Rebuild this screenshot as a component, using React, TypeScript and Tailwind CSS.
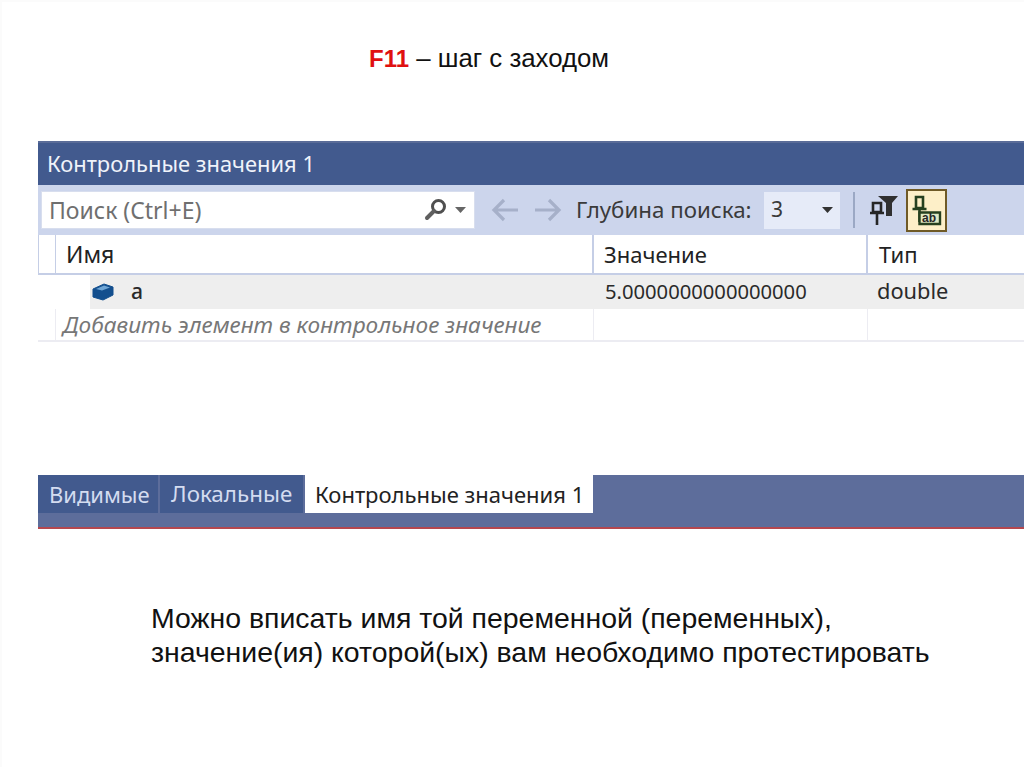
const ui = { fontFamily: '"Noto Sans", "Open Sans", sans-serif' };

function Search() {
  return (
    <svg width="26" height="26" viewBox="0 0 26 26" className="shrink-0">
      <circle cx="15.5" cy="9.5" r="6" fill="none" stroke="#4f4f4f" strokeWidth="3" />
      <path d="M11 14 L4 21" stroke="#5f5f5f" strokeWidth="4" strokeLinecap="round" />
    </svg>
  );
}

function Arrow({ flip }: { flip?: boolean }) {
  return (
    <svg width="28" height="24" viewBox="0 0 28 24" style={flip ? { transform: "scaleX(-1)" } : undefined}>
      <path d="M13 2 L3 12 L13 22 M3 12 H27" fill="none" stroke="#a6b0c9" strokeWidth="3.2" />
    </svg>
  );
}

function Caret({ color = "#555" }: { color?: string }) {
  return <svg width="11" height="6" viewBox="0 0 11 6"><path d="M0 0H11L5.5 6Z" fill={color} /></svg>;
}

function PinFilter() {
  return (
    <svg width="30" height="32" viewBox="0 0 30 32">
      <path d="M3 9h8v9H3z" fill="none" stroke="#262626" strokeWidth="2.6" />
      <path d="M0 19h14M7 19v12" stroke="#262626" strokeWidth="2.6" />
      <path d="M8 2h20l-6 7v13h-6V9z" fill="#303030" />
    </svg>
  );
}

function PinTab() {
  return (
    <svg width="37" height="39" viewBox="0 0 37 39">
      <path d="M8 6h7v11H8z" fill="none" stroke="#26401f" strokeWidth="2.6" />
      <path d="M4.5 18h14M11.5 18v13" stroke="#26401f" strokeWidth="2.6" />
      <path d="M11.5 21.5H32V33H11.5Z" fill="#dfe8c4" stroke="#26401f" strokeWidth="2.4" />
      <text x="14" y="31" fontSize="12" fontWeight="700" fill="#262626" style={{ fontFamily: '"Liberation Sans", sans-serif' }}>ab</text>
    </svg>
  );
}

function Cube() {
  return (
    <svg width="22" height="18" viewBox="0 0 22 18">
      <path d="M1 6 L12 1 L21 4 V12 L11 17 L1 14 Z" fill="#134f8e" stroke="#134f8e" strokeLinejoin="round" />
      <path d="M4 6 L12 2.5 L18 4.5 L10 7.5 Z" fill="#6fa6d6" />
    </svg>
  );
}

export default function App() {
  return (
    <div className="w-[1024px] h-[767px] bg-white overflow-hidden shadow-[inset_2px_2px_0_#fbfbfb]" style={{ fontFamily: '"Liberation Sans", Arial, sans-serif' }}>
      <div className="h-[141px] pt-[42px] pl-[369px] text-[25.8px] leading-[32px] text-[#111]">
        <span className="font-bold text-[24px] text-[#e01010]">F11</span> – шаг с заходом
      </div>

      <div className="ml-[38px] h-[388px] flex flex-col border-b-2 border-[#b5484f] bg-white" style={ui}>
        <div className="h-[44px] shrink-0 bg-[#425a8e] border-t-2 border-[#5a6c98] pl-[9px] pt-[1px] flex items-center text-[21.9px] text-[#f0f3fa]">
          Контрольные значения 1
        </div>

        <div className="h-[50px] shrink-0 bg-[#ccd5ec] flex items-center pl-[3px] text-[#3a3a3a]">
          <div className="w-[434px] h-[38px] bg-white border border-[#d8deee] flex items-center pl-[7px] pr-[8px] text-[23px] text-[#6f6f6f]">
            <span className="flex-1">Поиск (Ctrl+E)</span>
            <Search />
            <span className="ml-[6px] flex"><Caret color="#666" /></span>
          </div>
          <div className="ml-[16px] flex gap-[15px]"><Arrow /><Arrow flip /></div>
          <span className="ml-[14px] w-[175px] text-[22.3px] whitespace-nowrap">Глубина поиска:</span>
          <div className="ml-[13px] w-[76px] h-[37px] bg-[#e6ebf8] flex items-center justify-between pl-[7px] pr-[7px] text-[21px]">
            <span>3</span><Caret color="#333" />
          </div>
          <div className="ml-[13px] w-[2px] h-[36px] bg-[#9ba8c4]" />
          <div className="ml-[15px] flex"><PinFilter /></div>
          <div className="ml-[6px] w-[41px] h-[43px] bg-[#fdefc8] border-2 border-[#6f5a26] flex items-center justify-center"><PinTab /></div>
        </div>

        <div className="h-[40px] shrink-0 bg-white border-b-[2px] border-[#c5cee6] flex text-[22px] text-[#222] border-l border-l-[#c5cee6]">
          <div className="w-[17px] border-r border-[#c5cee6]" />
          <div className="w-[538px] pl-[10px] pt-[1px] flex items-center border-r-2 border-[#c5cee6] text-[23px]">Имя</div>
          <div className="w-[274px] pl-[10px] pt-[1px] flex items-center border-r-2 border-[#c5cee6]">Значение</div>
          <div className="flex-1 pl-[11px] pt-[1px] flex items-center">Тип</div>
        </div>

        <div className="h-[34px] shrink-0 flex text-[21.8px] text-[#2a2a2a]">
          <div className="w-[52px] shrink-0" />
          <div className="flex-1 bg-[#eeeeee] flex items-center pb-[1px]">
            <div className="w-[504px] pl-[2px] flex items-center">
              <Cube />
              <span className="ml-[17px] text-[21px] font-medium">a</span>
            </div>
            <div className="w-[273px] pl-[11px] text-[20.2px] whitespace-nowrap">5.0000000000000000</div>
            <div className="pl-[10px]">double</div>
          </div>
        </div>

        <div className="h-[33px] shrink-0 flex text-[22.6px] italic text-[#777] border-b-2 border-[#ececf2]">
          <div className="w-[18px] shrink-0 border-r border-[#ececf2]" />
          <div className="w-[538px] pl-[7px] flex items-center border-r border-[#ececf2] whitespace-nowrap">Добавить элемент в контрольное значение</div>
          <div className="w-[274px] border-r border-[#ececf2]" />
        </div>

        <div className="flex-1" />

        <div className="h-[52px] shrink-0 bg-[#5d6d9b] flex items-start text-[22px]">
          <div className="h-[38px] w-[120px] bg-[#425a8e] flex items-center pl-[11px] text-[#d4dcf0]">Видимые</div>
          <div className="ml-[2px] h-[38px] w-[143px] bg-[#425a8e] flex items-center pl-[11px] text-[#d4dcf0] text-[22.4px]">Локальные</div>
          <div className="ml-[2px] h-[38px] w-[288px] bg-white flex items-center pl-[10px] text-[#222] whitespace-nowrap">Контрольные значения 1</div>
        </div>
      </div>

      <div className="pt-[72px] pl-[151px] text-[28.45px] leading-[34px] text-[#111]">
        <div>Можно вписать имя той переменной (переменных),</div>
        <div>значение(ия) которой(ых) вам необходимо протестировать</div>
      </div>
    </div>
  );
}
